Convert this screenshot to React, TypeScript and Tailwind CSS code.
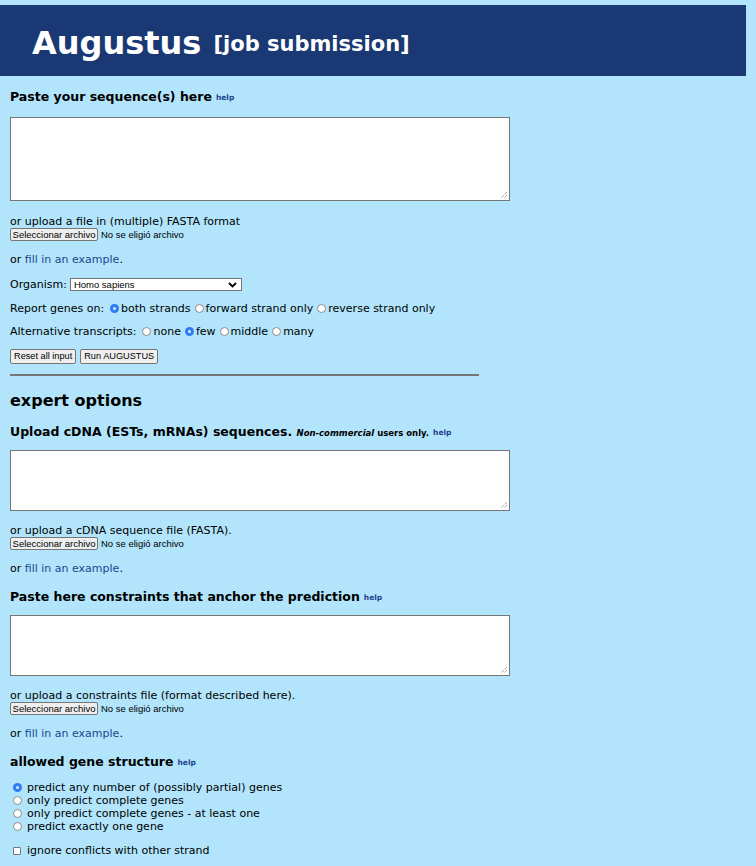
import React from "react";

const Help = () => (
  <span className="ml-[4px] align-middle text-[7.5px] font-bold text-[#1d3f8f]">help</span>
);

const FileInput = () => (
  <div className="flex h-[13px] items-center font-['Liberation_Sans'] text-[9.5px] leading-none">
    <span className="flex h-[13px] w-[88px] items-center justify-center rounded-[2px] border border-[#767676] bg-[#efefef] text-black">
      Seleccionar archivo
    </span>
    <span className="ml-[3px] text-black">No se eligió archivo</span>
  </div>
);

const Radio = ({ on }: { on?: boolean }) =>
  on ? (
    <span className="mr-[2px] inline-flex h-[9px] w-[9px] items-center justify-center rounded-full bg-[#2e7cf6]">
      <span className="h-[3px] w-[3px] rounded-full bg-[#dcebff]" />
    </span>
  ) : (
    <span className="mr-[2px] inline-block h-[9px] w-[9px] rounded-full border border-[#8a8a8a] bg-white" />
  );

const Area = ({ h }: { h: string }) => (
  <div className={`relative w-[500px] border border-[#767676] bg-white ${h}`}>
    <svg className="absolute bottom-[1px] right-[1px]" width="8" height="8" viewBox="0 0 8 8">
      <path d="M7 1L1 7M7 4L4 7" stroke="#777" strokeWidth="1" strokeDasharray="1 1" />
    </svg>
  </div>
);

const Example = () => (
  <div className="text-[11px] leading-[13px]">
    or <span className="text-[#1d4690]">fill in an example</span>.
  </div>
);

export default function App() {
  return (
    <div className="min-h-[866px] bg-[#b2e5fb] pt-[5px] font-['DejaVu_Sans',sans-serif] text-black">
      <div className="flex h-[71px] w-[746px] items-center bg-[#1a3873] pl-[32px] pt-[4px] text-white">
        <span className="text-[32px] font-bold">Augustus</span>
        <span className="ml-[12px] mt-[4px] text-[21px] font-bold">[job submission]</span>
      </div>

      <div className="px-[10px]">
        <div className="mt-[13px] text-[12.5px] font-bold leading-[15px]">
          Paste your sequence(s) here<Help />
        </div>
        <div className="mt-[12px]">
          <Area h="h-[84px]" />
        </div>
        <div className="mt-[14px] text-[11px] leading-[13px]">or upload a file in (multiple) FASTA format</div>
        <FileInput />
        <div className="mt-[12px]">
          <Example />
        </div>

        <div className="mt-[12px] flex items-center text-[11px] leading-[13px]">
          Organism:
          <span className="ml-[3px] flex h-[13px] w-[172px] items-center justify-between border border-[#767676] bg-white pl-[3px] pr-[4px] font-['Liberation_Sans'] text-[9.5px]">
            Homo sapiens
            <svg width="9" height="6" viewBox="0 0 9 6">
              <path d="M1 1l3.5 3.5L8 1" stroke="black" strokeWidth="1.8" fill="none" />
            </svg>
          </span>
        </div>

        <div className="mt-[11px] flex items-center text-[11px] leading-[13px]">
          <span className="mr-[6px]">Report genes on:</span>
          <Radio on />
          <span className="mr-[4px]">both strands</span>
          <Radio />
          <span className="mr-[4px]">forward strand only</span>
          <Radio />
          <span>reverse strand only</span>
        </div>

        <div className="mt-[10px] flex items-center text-[11px] leading-[13px]">
          <span className="mr-[6px]">Alternative transcripts:</span>
          <Radio />
          <span className="mr-[4px]">none</span>
          <Radio on />
          <span className="mr-[4px]">few</span>
          <Radio />
          <span className="mr-[4px]">middle</span>
          <Radio />
          <span>many</span>
        </div>

        <div className="mt-[11px] flex gap-[4px] font-['Liberation_Sans'] text-[9.2px] leading-none">
          <span className="flex h-[15px] items-center rounded-[2px] border border-[#767676] bg-[#efefef] px-[3px]">
            Reset all input
          </span>
          <span className="flex h-[15px] items-center rounded-[2px] border border-[#767676] bg-[#efefef] px-[3px]">
            Run AUGUSTUS
          </span>
        </div>

        <div className="mt-[10px] h-[2px] w-[469px] bg-[#767676]" />

        <div className="mt-[15px] text-[16px] font-bold leading-[20px]">expert options</div>

        <div className="mt-[13px] text-[12.5px] font-bold leading-[15px]">
          Upload cDNA (ESTs, mRNAs) sequences.{" "}
          <span className="text-[8.5px]">
            <i>Non-commercial</i> users only.
          </span>
          <Help />
        </div>
        <div className="mt-[9px]">
          <Area h="h-[61px]" />
        </div>
        <div className="mt-[13px] text-[11px] leading-[13px]">or upload a cDNA sequence file (FASTA).</div>
        <FileInput />
        <div className="mt-[12px]">
          <Example />
        </div>

        <div className="mt-[14px] text-[12.5px] font-bold leading-[15px]">
          Paste here constraints that anchor the prediction<Help />
        </div>
        <div className="mt-[10px]">
          <Area h="h-[61px]" />
        </div>
        <div className="mt-[13px] text-[11px] leading-[13px]">
          or upload a constraints file (format described here).
        </div>
        <FileInput />
        <div className="mt-[12px]">
          <Example />
        </div>

        <div className="mt-[14px] text-[12.5px] font-bold leading-[15px]">
          allowed gene structure<Help />
        </div>

        <div className="mt-[11px] flex flex-col text-[11px] leading-[13px]">
          {[
            "predict any number of (possibly partial) genes",
            "only predict complete genes",
            "only predict complete genes - at least one",
            "predict exactly one gene",
          ].map((t, i) => (
            <div key={t} className="flex items-center">
              <span className="ml-[3px] mr-[3px] flex">
                <Radio on={i === 0} />
              </span>
              {t}
            </div>
          ))}
        </div>

        <div className="mt-[11px] flex items-center text-[11px] leading-[13px]">
          <span className="ml-[3px] mr-[6px] inline-block h-[8px] w-[8px] rounded-[1px] border border-[#777] bg-white" />
          ignore conflicts with other strand
        </div>
      </div>
    </div>
  );
}
